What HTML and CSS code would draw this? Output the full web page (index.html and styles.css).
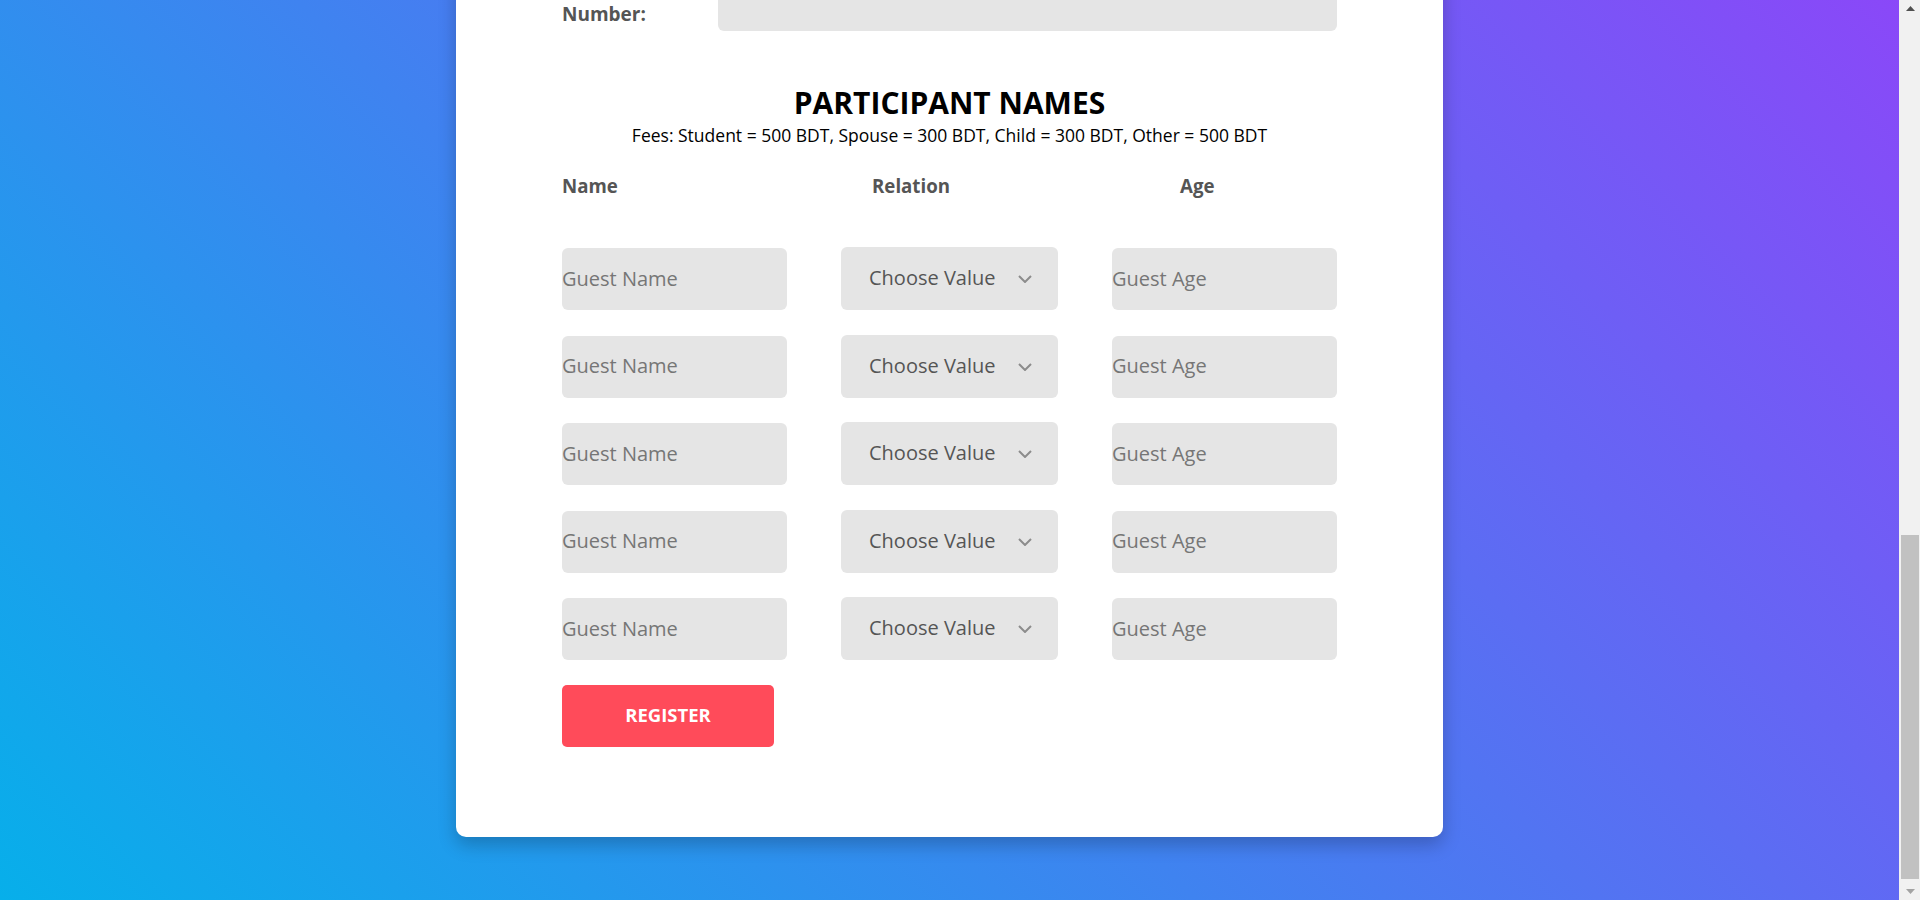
FILE: index.html
```html
<!DOCTYPE html>
<html lang="en">
<head>
<meta charset="utf-8">
<title>Registration</title>
<link rel="stylesheet" href="styles.css">
</head>
<body>
<div class="page">
  <main class="stage">
    <form class="card">
      <div class="number-row">
        <label class="field-label">Number:</label>
        <input class="number-input" type="text">
      </div>

      <h2 class="section-title">PARTICIPANT NAMES</h2>
      <p class="fees">Fees: Student = 500 BDT, Spouse = 300 BDT, Child = 300 BDT, Other = 500 BDT</p>

      <div class="col-labels">
        <span class="col-label">Name</span>
        <span class="col-label">Relation</span>
        <span class="col-label">Age</span>
      </div>

      <div class="guest-rows">
        <div class="guest-row">
          <input class="field" type="text" placeholder="Guest Name">
          <div class="select-wrap">
            <select class="select"><option>Choose Value</option><option>Student</option><option>Spouse</option><option>Child</option><option>Other</option></select>
            <svg class="chevron" viewBox="0 0 14 8" width="14" height="8"><path d="M1 1 L7 7 L13 1" fill="none" stroke="#8c8c8c" stroke-width="2"/></svg>
          </div>
          <input class="field" type="text" placeholder="Guest Age">
        </div>
        <div class="guest-row">
          <input class="field" type="text" placeholder="Guest Name">
          <div class="select-wrap">
            <select class="select"><option>Choose Value</option><option>Student</option><option>Spouse</option><option>Child</option><option>Other</option></select>
            <svg class="chevron" viewBox="0 0 14 8" width="14" height="8"><path d="M1 1 L7 7 L13 1" fill="none" stroke="#8c8c8c" stroke-width="2"/></svg>
          </div>
          <input class="field" type="text" placeholder="Guest Age">
        </div>
        <div class="guest-row">
          <input class="field" type="text" placeholder="Guest Name">
          <div class="select-wrap">
            <select class="select"><option>Choose Value</option><option>Student</option><option>Spouse</option><option>Child</option><option>Other</option></select>
            <svg class="chevron" viewBox="0 0 14 8" width="14" height="8"><path d="M1 1 L7 7 L13 1" fill="none" stroke="#8c8c8c" stroke-width="2"/></svg>
          </div>
          <input class="field" type="text" placeholder="Guest Age">
        </div>
        <div class="guest-row">
          <input class="field" type="text" placeholder="Guest Name">
          <div class="select-wrap">
            <select class="select"><option>Choose Value</option><option>Student</option><option>Spouse</option><option>Child</option><option>Other</option></select>
            <svg class="chevron" viewBox="0 0 14 8" width="14" height="8"><path d="M1 1 L7 7 L13 1" fill="none" stroke="#8c8c8c" stroke-width="2"/></svg>
          </div>
          <input class="field" type="text" placeholder="Guest Age">
        </div>
        <div class="guest-row">
          <input class="field" type="text" placeholder="Guest Name">
          <div class="select-wrap">
            <select class="select"><option>Choose Value</option><option>Student</option><option>Spouse</option><option>Child</option><option>Other</option></select>
            <svg class="chevron" viewBox="0 0 14 8" width="14" height="8"><path d="M1 1 L7 7 L13 1" fill="none" stroke="#8c8c8c" stroke-width="2"/></svg>
          </div>
          <input class="field" type="text" placeholder="Guest Age">
        </div>
      </div>

      <button class="register" type="button">REGISTER</button>
    </form>
  </main>
  <div class="scrollbar">
    <div class="sb-btn"><svg viewBox="0 0 9 5" width="9" height="5"><path d="M0 5 L4.5 0 L9 5 Z" fill="#505050"/></svg></div>
    <div class="sb-track">
      <div class="sb-thumb"></div>
    </div>
    <div class="sb-btn"><svg viewBox="0 0 9 5" width="9" height="5"><path d="M0 0 L9 0 L4.5 5 Z" fill="#a3a3a3"/></svg></div>
  </div>
</div>
</body>
</html>
```

FILE: styles.css
```css
html, body {
  margin: 0;
  padding: 0;
  height: 900px;
  overflow: hidden;
}

body {
  font-family: "Open Sans", "Noto Sans", sans-serif;
}

.page {
  display: flex;
  height: 900px;
}

.stage {
  flex: 1;
  display: flex;
  justify-content: center;
  align-items: flex-start;
  overflow: hidden;
  background: linear-gradient(45deg, #07afea 0%, #8a48f8 100%);
}

.card {
  width: 987px;
  box-sizing: border-box;
  margin-top: -31px;
  padding: 0 106px 90px 106px;
  background: #fff;
  border-radius: 10px;
  box-shadow: 0 8px 18px rgba(0, 0, 0, 0.22);
}

.number-row {
  display: flex;
  align-items: flex-end;
}

.field-label {
  width: 156px;
  flex: none;
  font-size: 19px;
  line-height: 25px;
  font-weight: 700;
  color: #555;
  padding-bottom: 4px;
}

.number-input {
  flex: 1;
  height: 62px;
  border: none;
  border-radius: 6px;
  background: #e5e5e5;
  padding: 0;
}

.section-title {
  margin: 55px 0 0;
  text-align: center;
  font-size: 30px;
  line-height: 34px;
  font-weight: 700;
  color: #000;
}

.fees {
  margin: 4px 0 0;
  text-align: center;
  font-size: 17.5px;
  line-height: 23px;
  color: #000;
}

.col-labels {
  display: grid;
  grid-template-columns: 310px 308px 1fr;
  margin-top: 26px;
}

.col-label {
  font-size: 18.7px;
  line-height: 25px;
  font-weight: 700;
  color: #555;
}

.guest-rows {
  display: flex;
  flex-direction: column;
  gap: 25.5px;
  margin-top: 50px;
}

.guest-row {
  display: grid;
  grid-template-columns: 225px 217px 225px;
  justify-content: space-between;
  align-items: center;
}

.field {
  height: 62px;
  box-sizing: border-box;
  border: none;
  border-radius: 6px;
  background: #e5e5e5;
  padding: 0 0 2px;
  font-family: "Open Sans", sans-serif;
  font-size: 20px;
  color: #555;
  outline: none;
}

.field::placeholder {
  color: #767676;
}

.select-wrap {
  position: relative;
  height: 63px;
  margin-top: -1px;
}

.select {
  width: 100%;
  height: 100%;
  box-sizing: border-box;
  appearance: none;
  -webkit-appearance: none;
  border: none;
  border-radius: 6px;
  background: #e5e5e5;
  padding: 0 0 2px 28px;
  font-family: "Open Sans", sans-serif;
  font-size: 20px;
  color: #555;
  outline: none;
}

.chevron {
  position: absolute;
  left: 177px;
  top: 28px;
  pointer-events: none;
}

.register {
  display: block;
  width: 212px;
  height: 62px;
  margin-top: 25px;
  border: none;
  border-radius: 5px;
  background: #ff4b5a;
  color: #fff;
  font-family: "Open Sans", sans-serif;
  font-size: 18.5px;
  font-weight: 700;
  padding: 0 0 3px;
}

.scrollbar {
  width: 21px;
  flex: none;
  display: flex;
  flex-direction: column;
  background: #f1f1f1;
}

.sb-btn {
  height: 17px;
  display: flex;
  align-items: center;
  justify-content: center;
  padding-left: 2px;
}

.sb-track {
  flex: 1;
  display: flex;
  flex-direction: column;
  justify-content: flex-end;
  padding: 0 1px 4px 2px;
}

.sb-thumb {
  height: 344px;
  background: #c1c1c1;
}
```
